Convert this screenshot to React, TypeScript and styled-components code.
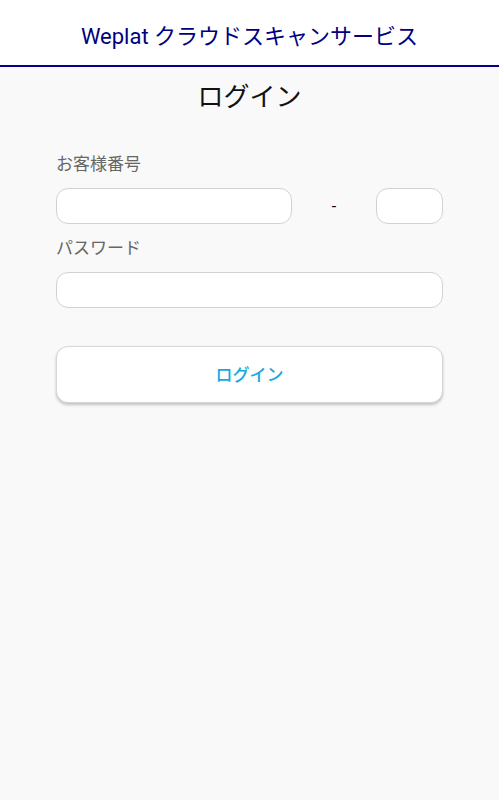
import styled, { createGlobalStyle } from 'styled-components'

const GlobalStyle = createGlobalStyle`
  html, body {
    margin: 0;
    padding: 0;
    background: #f9f9f9;
    font-family: Roboto, "Noto Sans CJK JP", sans-serif;
  }
`

const Page = styled.div`
  min-height: 800px;
  background: #f9f9f9;
`

const Header = styled.header`
  height: 65px;
  background: #fff;
  border-bottom: 2px solid #00008b;
  display: flex;
  align-items: center;
  justify-content: center;
`

const HeaderTitle = styled.h1`
  margin: 2px 0 0;
  font-size: 22px;
  font-weight: 400;
  color: #000080;
`

const Main = styled.main`
  padding: 0 56px;
`

const PageTitle = styled.h2`
  margin: 14px 0 0;
  font-size: 26px;
  line-height: 32px;
  font-weight: 400;
  text-align: center;
  color: #111;
`

const Label = styled.label<{ $top: number }>`
  display: block;
  margin-top: ${(p) => p.$top}px;
  font-size: 17px;
  line-height: 24px;
  color: #666;
`

const Row = styled.div`
  display: flex;
  align-items: center;
  margin-top: 12px;
`

const Input = styled.input<{ $width?: number }>`
  box-sizing: border-box;
  height: 36px;
  ${(p) => (p.$width ? `width: ${p.$width}px;` : 'flex: 1; min-width: 0;')}
  border: 1px solid #d2d2d2;
  border-radius: 12px;
  background: #fff;
  padding: 0 12px;
  font-size: 16px;
  outline: none;
`

const Dash = styled.span`
  width: 84px;
  text-align: center;
  font-size: 16px;
  color: #000;
`

const SubmitButton = styled.button`
  display: block;
  box-sizing: border-box;
  width: 100%;
  height: 57px;
  margin-top: 38px;
  padding: 0 0 3px;
  border: 1px solid #d6d6d6;
  border-radius: 12px;
  background: #fff;
  box-shadow: 0 2px 3px rgba(0, 0, 0, 0.22);
  font-family: Roboto, "Noto Sans CJK JP", sans-serif;
  font-size: 17px;
  font-weight: 500;
  color: #17a8e0;
`

export default function App() {
  return (
    <Page>
      <GlobalStyle />
      <Header>
        <HeaderTitle>Weplat クラウドスキャンサービス</HeaderTitle>
      </Header>
      <Main>
        <PageTitle>ログイン</PageTitle>
        <Label $top={39}>お客様番号</Label>
        <Row>
          <Input />
          <Dash>-</Dash>
          <Input $width={67} />
        </Row>
        <Label $top={12}>パスワード</Label>
        <Row>
          <Input type="password" />
        </Row>
        <SubmitButton>ログイン</SubmitButton>
      </Main>
    </Page>
  )
}
